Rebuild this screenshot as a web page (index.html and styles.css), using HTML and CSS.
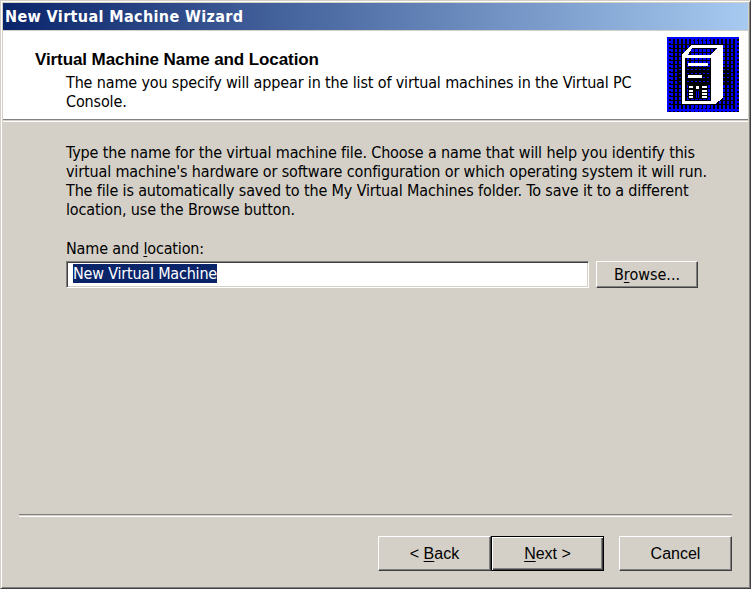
FILE: index.html
```html
<!DOCTYPE html>
<html lang="en">
<head>
<meta charset="utf-8">
<title>New Virtual Machine Wizard</title>
<link rel="stylesheet" href="styles.css">
</head>
<body>
<main class="window">
  <div class="titlebar">New Virtual Machine Wizard</div>
  <header class="header">
    <div class="heading">
      <h1>Virtual Machine Name and Location</h1>
      <p>The name you specify will appear in the list of virtual machines in the Virtual PC<br>Console.</p>
    </div>
    <svg class="icon" width="72" height="75" viewBox="0 0 72 75" shape-rendering="crispEdges">
      <defs>
        <pattern id="grid" width="4" height="4" patternUnits="userSpaceOnUse">
          <path fill="#00f" d="M0 0h2v3H0z"/>
        </pattern>
        <pattern id="dense" width="4" height="4" patternUnits="userSpaceOnUse">
          <path fill="#00f" d="M0 0h3v3H0z"/>
        </pattern>
        <pattern id="dots" width="4" height="4" patternUnits="userSpaceOnUse">
          <path fill="#00f" d="M0 0h2v1H0z"/>
        </pattern>
        <pattern id="check" width="4" height="4" patternUnits="userSpaceOnUse">
          <path fill="#00f" d="M0 0h4v2H2v2H0z"/>
        </pattern>
      </defs>
      <path fill="#000" d="M0 0h72v75H0z"/>
      <path fill="url(#grid)" d="M0 0h72v30H0zM0 48h72v27H0zM0 30h10v18H0zM62 30h10v18H62z"/>
      <path fill="url(#dots)" d="M10 30h52v18H10z"/>
      <path fill="url(#dense)" d="M25 0h18v30H25zM25 48h18v27H25z"/>
      <path fill="url(#check)" d="M0 0h72v4H0zM0 71h72v4H0zM0 0h4v75H0zM68 0h4v75h-4z"/>
      <path fill="#fff" fill-rule="evenodd" d="M15 18L24 8h32v53l-8 6H15zM25 11L21 18h23l6-7zM18 21v43h26V21z"/>
      <path fill="#fff" d="M21 26h20v3H21zM21 38h14v3H21z"/>
      <path d="M21 48h20v14H21z"/>
      <path fill="#fff" d="M22 49h4v2h-4zM22 53h4v2h-4zM22 56h4v2h-4zM22 59h4v2h-4zM29 49h3v3h-3zM35 49h5v2h-5zM35 53h5v2h-5zM35 56h5v2h-5zM35 59h5v2h-5z"/>
      <path fill="#00f" d="M29 54h1v7h-1zM31 54h1v7h-1z"/>
    </svg>
  </header>
  <section class="content">
    <p class="intro">Type the name for the virtual machine file. Choose a name that will help you identify this<br>virtual machine's hardware or software configuration or which operating system it will run.<br>The file is automatically saved to the My Virtual Machines folder. To save it to a different<br>location, use the Browse button.</p>
    <div class="label">Name and <u>l</u>ocation:</div>
    <div class="row">
      <div class="field"><span class="selection">New Virtual Machine</span></div>
      <div class="button browse"><span>B<u>r</u>owse...</span></div>
    </div>
  </section>
  <footer class="footer">
    <div class="button"><span>&lt; <u>B</u>ack</span></div>
    <div class="button default"><span><u>N</u>ext &gt;</span></div>
    <div class="button cancel"><span>Cancel</span></div>
  </footer>
</main>
</body>
</html>
```
FILE: styles.css
```css
* { box-sizing: border-box; }
body { margin: 0; background: #d4d0c8; color: #000; overflow: hidden; }
.window {
  width: 751px; height: 589px; padding: 2px 1px 0 2px;
  display: flex; flex-direction: column;
  font: 16px/19px "DejaVu Sans Condensed", "DejaVu Sans", sans-serif;
  font-stretch: condensed;
  letter-spacing: -0.145px;
  background: #d4d0c8;
  border: 1px solid; border-color: #d4d0c8 #404040 #404040 #d4d0c8;
  box-shadow: inset 1px 1px #fff, inset -1px -1px #808080;
  white-space: nowrap;
}
.titlebar {
  height: 27px; margin-right: 1px; padding-left: 2px; color: #fff; line-height: 28px;
  font-weight: bold; letter-spacing: 0.37px;
  background: linear-gradient(90deg, #0a246a, #a6caf0);
}
.header {
  display: flex; justify-content: space-between; height: 91px; margin: 1px 1px 0 0;
  padding: 6px 9px 0 32px; background: #fff; border-bottom: 1px solid #fff;
  box-shadow: inset 0 -1px #d4d0c8, inset 0 -2px #808080;
}
h1 { margin: 13px 0 0; font: bold 17px/19px "Liberation Sans", sans-serif; letter-spacing: -0.09px; }
.heading p { margin: 4px 0 0 31px; }
.icon { flex: none; }
.content { padding: 21px 0 0 63px; }
.intro { margin: 0; }
.label { margin: 20px 0 3px; }
.row { display: flex; gap: 7px; }
.field {
  width: 523px; height: 27px; padding: 2px 0 0 6px; background: #fff;
  border: 1px solid; border-color: #808080 #fff #fff #808080;
  box-shadow: inset 1px 1px #404040, inset -1px -1px #d4d0c8;
}
.selection { display: inline-block; height: 19px; background: #0a246a; color: #fff; letter-spacing: -0.2px; }
.button {
  display: flex; align-items: center; justify-content: center; width: 113px; height: 35px;
  border: 1px solid; border-color: #fff #404040 #404040 #fff; box-shadow: inset -1px -1px #808080;
  font-family: "Liberation Sans", sans-serif; letter-spacing: 0;
}
.browse { width: 102px; height: 27px; font-family: "DejaVu Sans Condensed", "DejaVu Sans", sans-serif; }
u { text-underline-offset: 2px; text-decoration-thickness: 1px; }
.footer {
  display: flex; justify-content: flex-end; margin: auto 17px 17px 16px; padding-top: 21px;
  border-top: 1px solid #808080; box-shadow: inset 0 1px #d4d0c8, inset 0 2px #fff;
}
.default { border-color: #000; box-shadow: inset 1px 1px #fff, inset -1px -1px #404040, inset -2px -2px #808080; }
.cancel { margin-left: 15px; }
```
